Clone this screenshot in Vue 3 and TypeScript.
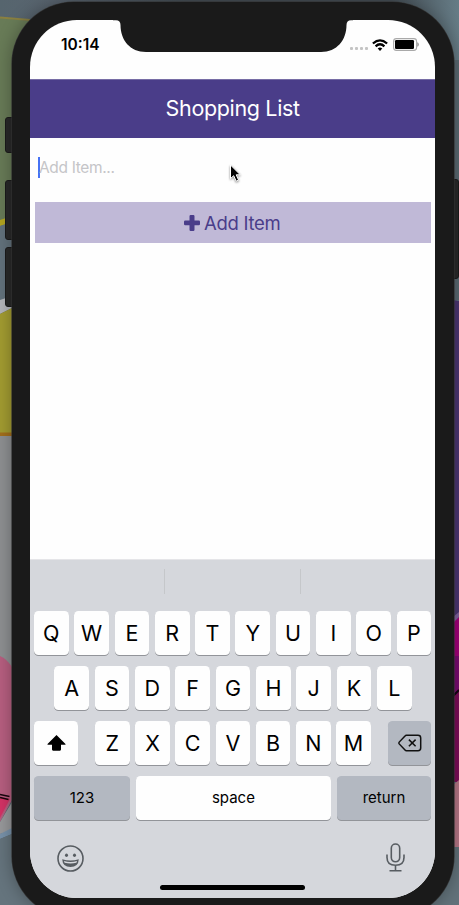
<script setup lang="ts">
const topRow: string[] = [...'QWERTYUIOP']
const homeRow: string[] = [...'ASDFGHJKL']
const bottomRow: string[] = [...'ZXCVBNM']
</script>

<template>
  <div class="desktop">
    <svg class="wallpaper" viewBox="0 0 459 905" aria-hidden="true">
      <defs>
        <linearGradient id="slate" x1="0" x2="1">
          <stop offset="0" stop-color="#56656e" />
          <stop offset=".12" stop-color="#59646f" />
          <stop offset=".4" stop-color="#454e55" />
          <stop offset=".85" stop-color="#454e55" />
          <stop offset="1" stop-color="#667c86" />
        </linearGradient>
      </defs>
      <rect width="459" height="905" fill="url(#slate)" />
      <path d="M0 18L30 21V221L0 226Z" fill="#687b57" />
      <path d="M0 17.500L30 20" stroke="#8a8040" stroke-width="2" />
      <path d="M0 220L12 216V222L0 226Z" fill="#b3a51f" />
      <path d="M0 226L12 222V300H0Z" fill="#63727c" />
      <path d="M0 300L12 296V308L0 314Z" fill="#b4b5bb" />
      <path d="M0 314L12 308V436H0Z" fill="#a39c31" />
      <path d="M0 432.500H12V436H0Z" fill="#a36f1c" />
      <path d="M0 436H12V667H0Z" fill="#8e9092" />
      <path d="M0 656Q7 659 12 667V800L0 822Z" fill="#b75f80" />
      <path d="M0 797L10 799L0 818Z" fill="#d43366" />
      <path d="M0 794.500L9.500 796.500M0 797.500L8.500 799.500" stroke="#17060d" stroke-width="1.500" />
      <path d="M0 822L12 802V831L0 834Z" fill="#98999b" />
      <path d="M0 834L12 828V834L0 839Z" fill="#7892aa" />
      <path d="M0 839L12 834V862Q17 890 40 905H0Z" fill="#65747d" />
      <path d="M453 60H459V300H453Z" fill="#5a6971" />
      <path d="M453 300L459 301V614L453 620Z" fill="#4b3671" />
      <path d="M453 617L459 612V617L453 623Z" fill="#80619e" />
      <path d="M453 623L459 617V656H453Z" fill="#a10079" />
      <path d="M453 656H459V690L453 695Z" fill="#780b70" />
      <path d="M453 694L459 689V782H453Z" fill="#7c0c58" />
      <path d="M453 696L459 690" stroke="#100410" stroke-width="2" />
      <path d="M453 785L459 780V847H453Z" fill="#b77787" />
      <path d="M453 847H459V905H430Q448 892 453 870Z" fill="#62727a" />
    </svg>
    <i class="side-key mute"></i>
    <i class="side-key volume-up"></i>
    <i class="side-key volume-down"></i>
    <i class="side-key power"></i>

    <div class="phone">
      <div class="screen">
        <header class="status">
          <span class="clock">10:14</span>
          <div class="indicators">
            <span class="dots"><i v-for="n in 4" :key="n"></i></span>
            <svg class="wifi" viewBox="0 0 16 12" aria-hidden="true">
              <path d="M.9 4.500Q8-1.800 15.100 4.500" />
              <path d="M3.600 7.400Q8 3.200 12.400 7.400" />
              <path class="solid" d="M5.700 9.500Q8 7.500 10.300 9.500L8 12Z" />
            </svg>
            <svg class="battery" viewBox="0 0 26 13" aria-hidden="true">
              <rect x=".6" y=".6" width="23" height="11.800" rx="2.800" fill="#fff" stroke="#a9a9a9" stroke-width="1.100" />
              <rect x="2" y="2" width="19" height="9" rx="1.300" />
              <path d="M24.700 4.600Q26.300 6.500 24.700 8.400Z" fill="#888" stroke="#888" stroke-width=".5" />
            </svg>
          </div>
        </header>

        <div class="title-bar"><h1>Shopping List</h1></div>

        <main class="content">
          <div class="field"><i class="caret"></i><span>Add Item...</span></div>
          <button class="add" type="button">
            <svg viewBox="0 0 16 16" aria-hidden="true">
              <path d="M6.700 0H9.300Q10.500 0 10.500 1.200V5.500H14.800Q16 5.500 16 6.700V9.100Q16 10.300 14.800 10.300H10.500V14.800Q10.500 16 9.300 16H6.700Q5.500 16 5.500 14.800V10.300H1.200Q0 10.300 0 9.100V6.700Q0 5.500 1.200 5.500H5.500V1.200Q5.500 0 6.700 0Z" />
            </svg>
            <span>Add Item</span>
          </button>
        </main>

        <section class="keyboard">
          <div class="suggestions"><i></i><i></i><i></i></div>
          <div class="keys">
            <div class="row"><span v-for="k in topRow" :key="k" class="key">{{ k }}</span></div>
            <div class="row home"><span v-for="k in homeRow" :key="k" class="key">{{ k }}</span></div>
            <div class="row spread">
              <span class="key">
                <svg class="shift" viewBox="0 0 19 16" aria-hidden="true">
                  <path d="M9.500 0L18.500 9Q19 9.700 18 9.700H14V14.600Q14 15.700 12.900 15.700H6.100Q5 15.700 5 14.600V9.700H1Q0 9.700 .5 9Z" />
                </svg>
              </span>
              <div class="letters"><span v-for="k in bottomRow" :key="k" class="key">{{ k }}</span></div>
              <span class="key dark">
                <svg class="erase" viewBox="0 0 24 18" aria-hidden="true">
                  <path d="M8.400 1.200H20Q22.700 1.200 22.700 3.900V14Q22.700 16.700 20 16.700H8.400Q7.600 16.700 7 16L1.200 9.900Q.6 9 1.200 8.100L7 1.900Q7.600 1.200 8.400 1.200Z" />
                  <path d="M10.900 5.600L17.600 12.300M17.600 5.600L10.900 12.300" />
                </svg>
              </span>
            </div>
            <div class="row actions">
              <span class="key dark">123</span>
              <span class="key">space</span>
              <span class="key dark">return</span>
            </div>
          </div>
          <div class="dock">
            <svg class="emoji" viewBox="0 0 27 27" aria-hidden="true">
              <circle cx="13.500" cy="13.500" r="12.500" />
              <ellipse class="ink" cx="9.500" cy="10.300" rx="1.500" ry="1.700" />
              <ellipse class="ink" cx="17.500" cy="10.300" rx="1.500" ry="1.700" />
              <path class="ink" d="M5.200 14.200Q13.500 16.700 21.800 14.200Q21.400 22 13.500 22Q5.600 22 5.200 14.200Z" />
              <path class="teeth" d="M6.900 16Q13.500 17.800 20.100 16L19.400 17.800Q13.500 19.300 7.600 17.800Z" />
            </svg>
            <svg class="mic" viewBox="0 0 19 29" aria-hidden="true">
              <rect x="5.300" y="1" width="8.400" height="17.800" rx="4.200" />
              <path d="M1 11.500V14.400Q1 22.200 9.500 22.200Q18 22.200 18 14.400V11.500M9.500 22.200V27.500M3.500 27.700H15.500" />
            </svg>
          </div>
          <div class="home-indicator"></div>
        </section>
      </div>
      <svg class="notch" viewBox="0 0 240 34" aria-hidden="true">
        <path d="M0 0H240V2.200H238Q233.500 2.200 233.500 7C233.500 22 224 34 208 34H33C17 34 7.500 22 7.500 7Q7.500 2.200 3 2.200H0Z" />
      </svg>
    </div>

    <svg class="pointer" viewBox="0 0 13 19" aria-hidden="true">
      <path d="M1.500 1V14.600L4.700 11.700L7.200 17.200L9.600 16.100L7.200 10.800H11.300Z" />
    </svg>
  </div>
</template>

<style>
body {
  overflow: hidden;
}
</style>

<style scoped>
* {
  box-sizing: border-box;
}

.desktop {
  position: relative;
  width: 459px;
  height: 905px;
  padding: 2px 5px 0 11.500px;
  overflow: hidden;
  font-family: Inter, "Liberation Sans", sans-serif;
  color: #000;
}

.wallpaper {
  position: absolute;
  inset: 0;
  width: 459px;
  height: 905px;
}

.side-key {
  position: absolute;
  left: 5px;
  width: 10px;
  background: #292929;
  border: 1px solid #1b1b1b;
  border-radius: 3px;
}

.mute { top: 117px; height: 36px; }
.volume-up { top: 180px; height: 60px; }
.volume-down { top: 247px; height: 60px; }
.power { top: 179px; left: 449px; height: 100px; }

.phone {
  position: relative;
  width: 442px;
  height: 916px;
  padding: 18px 18px 20px 18.500px;
  background: #1a1a1a;
  border-radius: 62px;
  box-shadow: 0 0 0 .6px #333, 0 0 18px #0005;
}

.screen {
  display: flex;
  flex-direction: column;
  width: 405.300px;
  height: 878px;
  overflow: hidden;
  background: #fefefe;
  border-radius: 47px;
}

.notch {
  position: absolute;
  left: 101px;
  top: 16.200px;
  width: 240px;
  height: 34px;
  fill: #1a1a1a;
}

/* Mouse pointer resting over the input field */
.pointer {
  position: absolute;
  left: 229px;
  top: 164px;
  width: 13px;
  height: 19px;
  overflow: visible;
  fill: #000;
  stroke: #fff;
  stroke-width: 1;
  filter: drop-shadow(0 1px 1px #0007);
}

.status {
  display: flex;
  flex: none;
  justify-content: space-between;
  height: 59px;
  padding: 14px 16px 0 31px;
}

.clock {
  font-size: 15.500px;
  font-weight: 600;
  line-height: 22px;
}

.indicators {
  display: flex;
  align-items: flex-start;
  padding-top: 4px;
}

.dots {
  display: flex;
  gap: 2px;
  margin: 9px 4px 0 0;
}

.dots i {
  width: 3px;
  height: 3px;
  background: #c4c4c4;
  border-radius: 1px;
}

.wifi {
  width: 16px;
  height: 12px;
  margin: .5px 5px 0 0;
  overflow: visible;
  fill: none;
  stroke: #000;
  stroke-width: 2.300;
}

.wifi .solid {
  fill: #000;
  stroke: none;
}

.battery {
  width: 26px;
  height: 13px;
}

.title-bar {
  display: flex;
  flex: none;
  align-items: center;
  justify-content: center;
  height: 59px;
  padding-bottom: 2px;
  background: #4a3d89;
  border-top: 1px solid #776da5;
}

h1 {
  margin: 0;
  color: #fff;
  font-size: 21.500px;
  font-weight: 400;
  letter-spacing: -.35px;
  line-height: 26px;
}

.content {
  flex: 1;
  padding: 0 5px;
}

.field {
  display: flex;
  align-items: center;
  height: 64px;
  padding: 0 3px 6px;
  color: #c5c5c8;
  font-size: 15.500px;
  letter-spacing: -.35px;
}

.caret {
  width: 2px;
  height: 21px;
  margin-right: -1px;
  background: #4672f4;
}

.add {
  display: flex;
  align-items: center;
  justify-content: center;
  gap: 4px;
  width: 395.500px;
  height: 41px;
  padding: 0 1px 0 0;
  color: #4a3d8a;
  background: #c0b9d7;
  border: 0;
  font: 400 18.500px/24px Inter, "Liberation Sans", sans-serif;
  letter-spacing: -.3px;
}

.add span {
  padding-top: 1px;
}

.add svg {
  width: 16px;
  height: 16px;
  fill: currentColor;
}

.keyboard {
  flex: none;
  height: 339px;
  background: #d5d7dc;
  border-top: 1px solid #e5e5e8;
}

.suggestions {
  display: grid;
  grid-template-columns: 134px 135.500px 1fr;
  height: 51px;
  padding: 9px 0 17px;
}

.suggestions i + i {
  border-left: 1px solid #c5c7ca;
}

.keys {
  display: flex;
  flex-direction: column;
  gap: 11px;
  padding: 0 4px;
}

.row {
  display: grid;
  grid-template-columns: repeat(10, 1fr);
  gap: 5.600px;
  height: 44px;
}

.home {
  grid-template-columns: repeat(9, 1fr);
  padding: 0 19.500px 0 20.300px;
}

.spread {
  grid-template-columns: 44px 1fr 43.500px;
  gap: 17px;
}

.letters {
  display: grid;
  grid-template-columns: repeat(7, 1fr);
  gap: 5.600px;
}

.actions {
  grid-template-columns: 96px 1fr 94.500px;
  gap: 6px;
}

.key {
  display: flex;
  align-items: center;
  justify-content: center;
  min-width: 0;
  background: #fefefe;
  border-radius: 4.500px;
  box-shadow: 0 1px 0 #929499;
  font-size: 21.500px;
  line-height: 26px;
}

.dark {
  background: #b3b8c1;
}

.actions .key {
  padding-bottom: 1px;
  font-size: 15px;
}

.shift {
  width: 19px;
  height: 16px;
}

.erase {
  width: 24px;
  height: 18px;
  fill: none;
  stroke: #111;
  stroke-width: 1.500;
}

.dock {
  display: flex;
  justify-content: space-between;
  padding: 23px 30px 0 27px;
  fill: none;
  stroke: #575c61;
  stroke-width: 1.600;
}

.emoji {
  width: 27px;
  height: 27px;
  margin-top: 2px;
}

.emoji .ink {
  fill: #575c61;
  stroke: none;
}

.emoji .teeth {
  fill: #d5d7dc;
  stroke: none;
}

.mic {
  width: 19px;
  height: 29px;
}

.home-indicator {
  width: 145px;
  height: 5px;
  margin: 13px auto 0;
  background: #000;
  border-radius: 3px;
}
</style>
